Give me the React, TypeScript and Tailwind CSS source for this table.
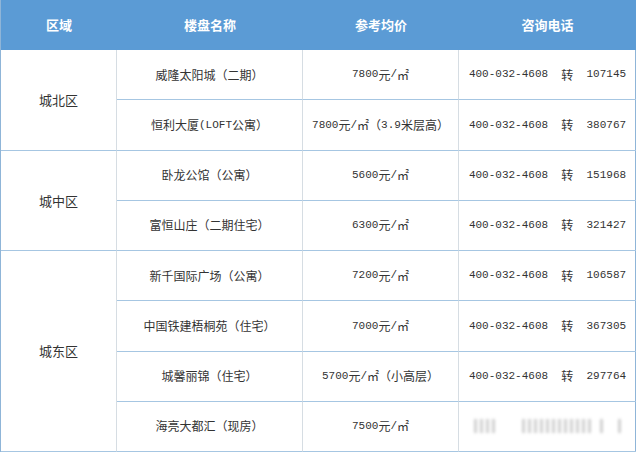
import React from 'react';

interface Row {
  name: string;
  price: string;
  ext?: string;
}

interface Area {
  area: string;
  rows: Row[];
}

const data: Area[] = [
  {
    area: '城北区',
    rows: [
      { name: '威隆太阳城（二期）', price: '7800元/㎡', ext: '107145' },
      { name: '恒利大厦(LOFT公寓）', price: '7800元/㎡（3.9米层高）', ext: '380767' },
    ],
  },
  {
    area: '城中区',
    rows: [
      { name: '卧龙公馆（公寓）', price: '5600元/㎡', ext: '151968' },
      { name: '富恒山庄（二期住宅）', price: '6300元/㎡', ext: '321427' },
    ],
  },
  {
    area: '城东区',
    rows: [
      { name: '新千国际广场（公寓）', price: '7200元/㎡', ext: '106587' },
      { name: '中国铁建梧桐苑（住宅）', price: '7000元/㎡', ext: '367305' },
      { name: '城馨丽锦（住宅）', price: '5700元/㎡（小高层）', ext: '297764' },
      { name: '海亮大都汇（现房）', price: '7500元/㎡' },
    ],
  },
];

// ascii runs get the narrow mono face, cjk runs the wider sans face
function Mixed({ text }: { text: string }) {
  const parts = text.split(/([\x20-\x7e]+)/).filter(Boolean);
  return (
    <>
      {parts.map((p, i) =>
        /^[\x20-\x7e]+$/.test(p) ? (
          <span key={i} className="font-['Liberation_Mono',monospace] text-[11px] whitespace-pre">
            {p}
          </span>
        ) : (
          <span key={i} className="text-[12px]">
            {p}
          </span>
        )
      )}
    </>
  );
}

const cell =
  'flex items-center justify-center border-b border-r border-b-[#a6c6e2] border-r-[#d6dde3] text-[#333] whitespace-nowrap';

// blurred-out phone number in the last row
const blurBars = [3, 3, 3, 3, 0, 0, 0, 0, 3, 3, 3, 3, 3, 3, 3, 3, 3, 3, 3, 3, 0, 3, 0, 0, 3];

export default function App() {
  return (
    <div className="w-[640px] h-[455px] bg-white overflow-hidden font-['Noto_Sans_CJK_SC',sans-serif]">
      <div className="w-[636px] border-l border-[#8fb5d8]">
        <div className="grid grid-cols-[116px_186px_156px_177px] h-[50px] bg-[#5b9bd5] text-white text-[13px] font-bold">
          <div className="flex items-center justify-center">区域</div>
          <div className="flex items-center justify-center">楼盘名称</div>
          <div className="flex items-center justify-center">参考均价</div>
          <div className="flex items-center justify-center">咨询电话</div>
        </div>
        <div className="grid grid-cols-[116px_186px_156px_177px] auto-rows-[50.25px] border-r border-r-[#8fb5d8]">
          {data.map((a) => (
            <React.Fragment key={a.area}>
              <div
                className={`${cell} text-[13px] ${
                  a.rows.length === 4 ? 'row-span-4' : 'row-span-2'
                }`}
              >
                {a.area}
              </div>
              {a.rows.map((r) => (
                <div
                  key={r.name}
                  className="col-start-2 col-span-3 grid grid-cols-[186px_156px_177px]"
                >
                  <div className={cell}>
                    <Mixed text={r.name} />
                  </div>
                  <div className={cell}>
                    <Mixed text={r.price} />
                  </div>
                  <div className={`${cell} border-r-0`}>
                    {r.ext ? (
                      <Mixed text={`400-032-4608  转  ${r.ext}`} />
                    ) : (
                      <div className="flex items-center gap-[3px] blur-[1.5px]">
                        {blurBars.map((b, i) => (
                          <div
                            key={i}
                            className={`w-[3px] h-[14px] ${b ? 'bg-[#cfcfcf]' : 'bg-transparent'}`}
                          />
                        ))}
                      </div>
                    )}
                  </div>
                </div>
              ))}
            </React.Fragment>
          ))}
        </div>
      </div>
    </div>
  );
}
